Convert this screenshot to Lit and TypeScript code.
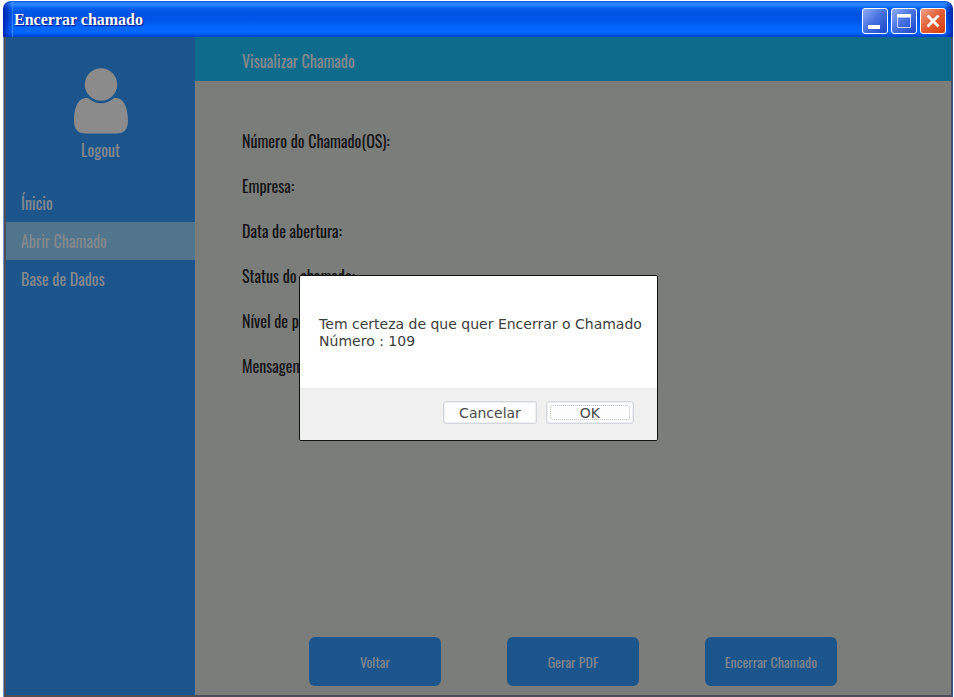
import { LitElement, html, css } from "lit";
import { customElement } from "lit/decorators.js";
import { classMap } from "lit/directives/class-map.js";

const NAV = [
  { label: "Ínicio", active: false },
  { label: "Abrir Chamado", active: true },
  { label: "Base de Dados", active: false },
];

const FIELDS = [
  "Número do Chamado(OS):",
  "Empresa:",
  "Data de abertura:",
  "Status do chamado:",
  "Nível de prioridade:",
  "Mensagem:",
];

const ACTIONS = ["Voltar", "Gerar PDF", "Encerrar Chamado"];

@customElement("title-bar")
export class TitleBar extends LitElement {
  static styles = css`
    :host {
      display: flex;
      align-items: center;
      justify-content: space-between;
      height: 36px;
      box-sizing: border-box;
      padding: 4px 7px 0 11px;
      border-radius: 8px 8px 0 0;
      background:
        linear-gradient(to right, transparent 9px, rgba(90, 150, 255, 0.6) 9px, rgba(90, 150, 255, 0.6) 10px, transparent 10px),
        linear-gradient(to right, rgba(0, 20, 160, 0.75) 0, rgba(0, 20, 160, 0) 9px),
        linear-gradient(to left, rgba(0, 20, 150, 0.75) 0, rgba(0, 20, 150, 0) 8px),
        linear-gradient(
          to bottom,
          #0a50d8 0,
          #2f86ff 2px,
          #2a84fb 4px,
          #0862ee 7px,
          #0054e3 12px,
          #0055e6 19px,
          #0066ff 27px,
          #0068ff 31px,
          #005bf0 33px,
          #0040cc 36px
        );
    }
    h1 {
      margin: -2px 0 0;
      font: bold 16px/20px "Liberation Serif", serif;
      color: #fff;
      text-shadow: 1px 1px 1px #0f1089;
    }
    .controls {
      display: flex;
      gap: 3px;
    }
    button {
      width: 26px;
      height: 26px;
      padding: 0;
      border: 1px solid #fff;
      border-radius: 3px;
      background: linear-gradient(135deg, #8fadf6 0%, #4a74e2 45%, #1846cc 100%);
    }
    .close {
      background: linear-gradient(135deg, #f0a48c 0%, #e4603a 45%, #d63c08 100%);
    }
    svg {
      display: block;
      width: 24px;
      height: 24px;
    }
  `;

  render() {
    return html`
      <h1>Encerrar chamado</h1>
      <div class="controls">
        <button type="button" aria-label="Minimizar">
          <svg viewBox="0 0 24 24"><rect x="5" y="16" width="12" height="4" fill="#fff" /></svg>
        </button>
        <button type="button" aria-label="Maximizar">
          <svg viewBox="0 0 24 24">
            <path d="M5.500 5.500h13v13h-13z" fill="none" stroke="#c9d7fb" />
            <rect x="5" y="5" width="14" height="3" fill="#fff" />
            <path d="M6 8.500h12" stroke="#a9c0f8" />
          </svg>
        </button>
        <button type="button" class="close" aria-label="Fechar">
          <svg viewBox="0 0 24 24">
            <path d="M6.500 6.500l11 11M17.500 6.500L6.500 17.500" stroke="#fff" stroke-width="2.800" />
          </svg>
        </button>
      </div>
    `;
  }
}

@customElement("side-nav")
export class SideNav extends LitElement {
  static styles = css`
    :host {
      display: block;
      background: #1c558c;
      padding-top: 31px;
    }
    a {
      color: #85898d;
      text-decoration: none;
    }
    .logout {
      display: flex;
      flex-direction: column;
      align-items: center;
      gap: 4px;
      margin-bottom: 22px;
      line-height: 24px;
    }
    .avatar {
      width: 54px;
      height: 66px;
    }
    ul {
      list-style: none;
      margin: 0;
      padding: 0;
    }
    .item {
      display: block;
      padding-left: 15px;
      line-height: 38px;
    }
    .active {
      background: #51758c;
    }
  `;

  render() {
    return html`
      <a class="logout" href="#logout">
        <svg class="avatar" viewBox="0 0 54 66" aria-hidden="true">
          <circle cx="27" cy="16.5" r="16.2" fill="#8b8b8b" />
          <path
            fill="#8b8b8b"
            d="M14 30C4 29 0 40 0 53C0 61 4 65.500 11 65.500H43C50 65.500 54 61 54 53C54 40 50 29 40 30C32 37 22 37 14 30Z"
          />
        </svg>
        Logout
      </a>
      <nav>
        <ul>
          ${NAV.map(
            (n) => html`<li>
              <a href="#" class=${classMap({ item: true, active: n.active })}>${n.label}</a>
            </li>`
          )}
        </ul>
      </nav>
    `;
  }
}

@customElement("confirm-dialog")
export class ConfirmDialog extends LitElement {
  static styles = css`
    :host {
      position: absolute;
      inset: 0;
      display: flex;
      align-items: center;
      justify-content: center;
      padding-bottom: 16px;
      pointer-events: none;
    }
    dialog {
      position: static;
      margin: 0;
      padding: 0;
      border: 1px solid #111;
      border-radius: 2px;
      background: #fff;
      color: #3c3c3c;
      font: 14px/17px "DejaVu Sans", sans-serif;
      pointer-events: auto;
      overflow: hidden;
    }
    p {
      margin: 0;
      padding: 40px 15px 38px 19px;
    }
    .buttons {
      display: flex;
      justify-content: flex-end;
      gap: 9px;
      padding: 12px 23px 16px;
      background: #f0f0f0;
      border-top: 1px solid #ebebeb;
    }
    button {
      box-sizing: border-box;
      height: 23px;
      min-width: 88px;
      padding: 1px 15px 0;
      border: 1px solid #d3d6dc;
      border-radius: 3px;
      background: #fdfdfd;
      box-shadow: inset 0 0 0 1px #eceef2;
      color: #4a4a4a;
      font: inherit;
      position: relative;
    }
    .ok::after {
      content: "";
      position: absolute;
      inset: 3px;
      border: 1px dotted #bbb;
      border-radius: 3px;
    }
  `;

  render() {
    return html`
      <dialog open aria-labelledby="msg">
        <p id="msg">
          Tem certeza de que quer Encerrar o Chamado<br />Número : 109
        </p>
        <div class="buttons">
          <button type="button">Cancelar</button>
          <button type="button" class="ok">OK</button>
        </div>
      </dialog>
    `;
  }
}

@customElement("app-root")
export class AppRoot extends LitElement {
  static styles = css`
    :host {
      display: flex;
      flex-direction: column;
      box-sizing: border-box;
      min-height: 100vh;
      padding: 1px 1px 0 3px;
      background: #fff;
      font: 400 16px/24px "Oswald", "Liberation Sans Narrow", "Roboto Condensed", "Liberation Sans", sans-serif;
    }
    .frame {
      flex: 1;
      display: flex;
      border-left: 1px solid #7d93c4;
      border-right: 1px solid #2f5596;
    }
    .body {
      position: relative;
      flex: 1;
      display: grid;
      grid-template-columns: 189px 1fr;
      border: solid #4b4e57;
      border-width: 0 1px 2px 2px;
    }
    main {
      display: flex;
      flex-direction: column;
      background: #7b7d7b;
    }
    .heading {
      height: 44px;
      box-sizing: border-box;
      margin: 0;
      padding: 2px 47px 0;
      background: #0f6b8c;
      color: #85898d;
      font: inherit;
      line-height: 44px;
    }
    .fields {
      flex: 1;
      list-style: none;
      margin: 0;
      padding: 38px 47px;
      color: #131313;
      line-height: 45px;
    }
    .actions {
      display: flex;
      justify-content: center;
      gap: 66px;
      padding-bottom: 9px;
    }
    .actions button {
      width: 132px;
      height: 49px;
      padding: 0;
      border: 0;
      border-radius: 6px;
      background: #1c558c;
      color: #7d858d;
      font: inherit;
      font-size: 14px;
    }
  `;

  render() {
    return html`
      <title-bar></title-bar>
      <div class="frame">
        <div class="body">
          <side-nav></side-nav>
          <main>
            <h2 class="heading">Visualizar Chamado</h2>
            <ul class="fields">
              ${FIELDS.map((f) => html`<li>${f}</li>`)}
            </ul>
            <div class="actions">
              ${ACTIONS.map((a) => html`<button type="button">${a}</button>`)}
            </div>
          </main>
          <confirm-dialog></confirm-dialog>
        </div>
      </div>
    `;
  }
}
